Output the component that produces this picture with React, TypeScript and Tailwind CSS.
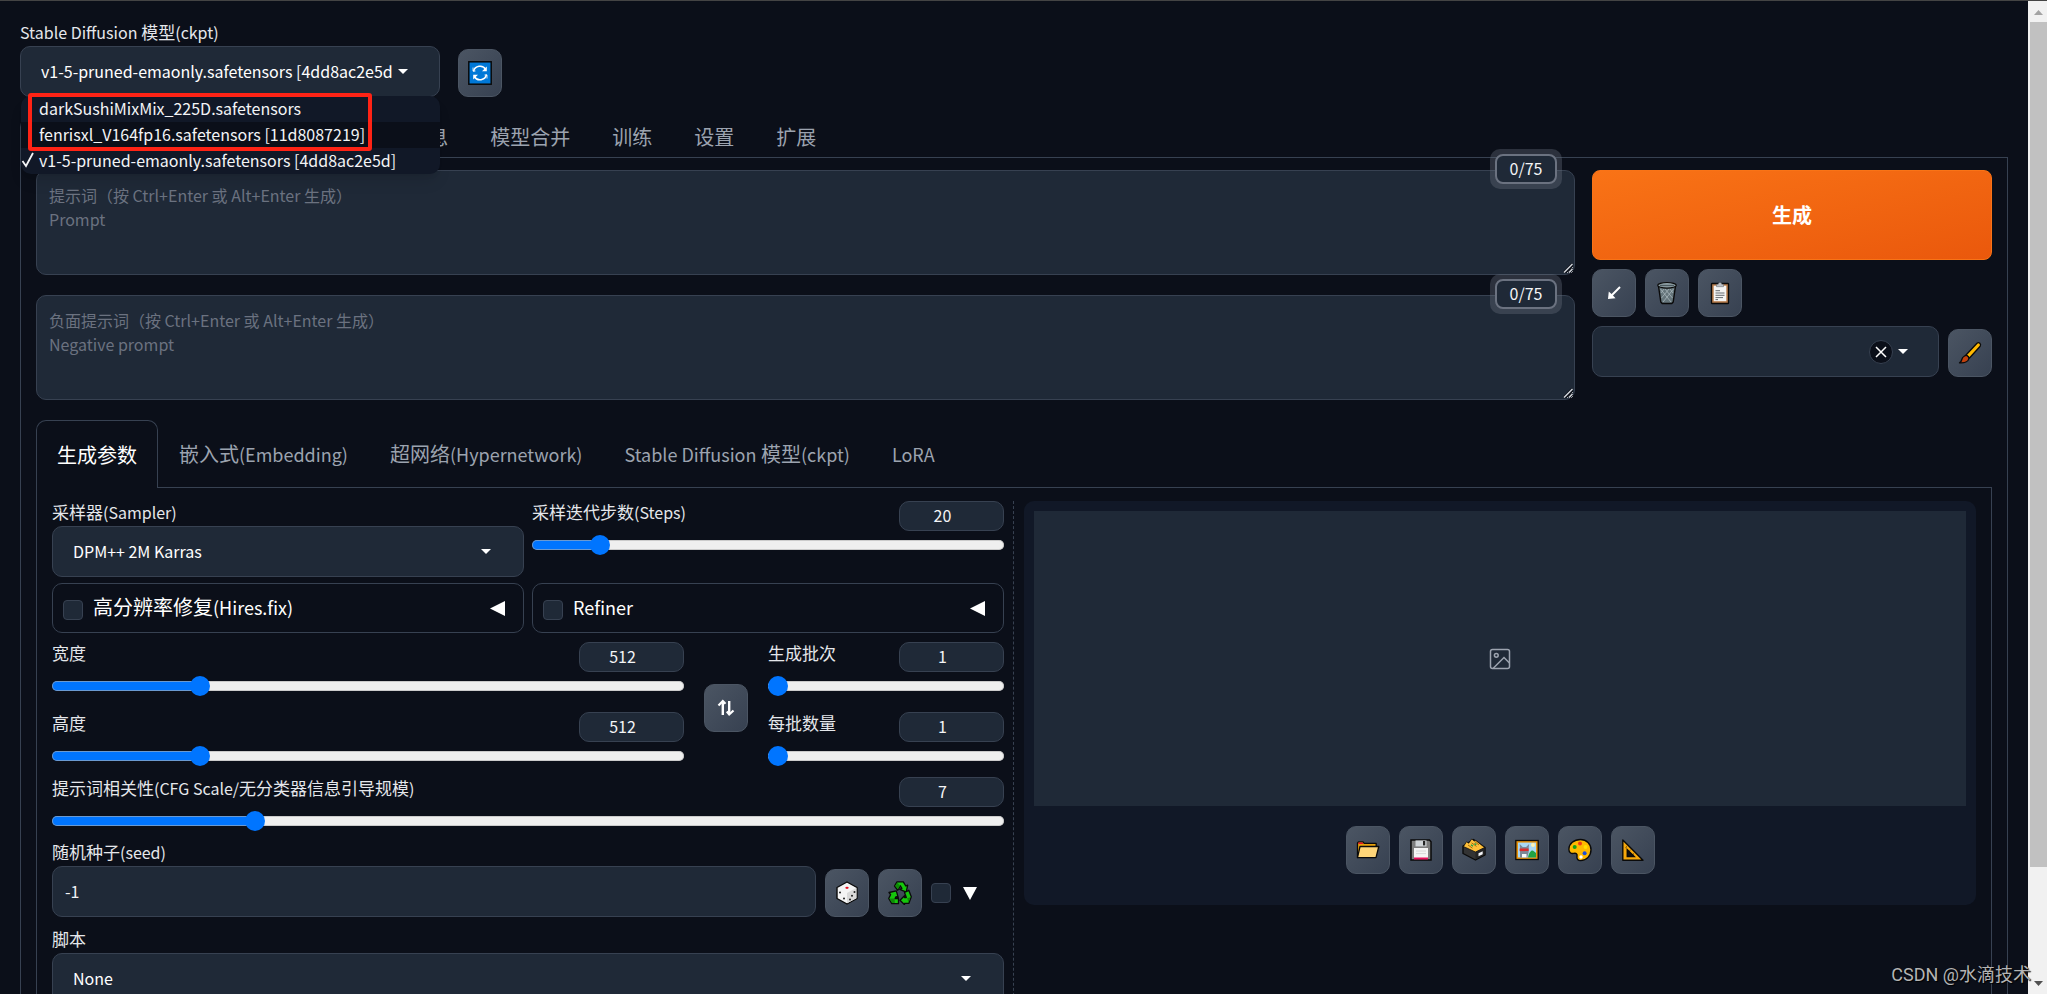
import { Fragment, useId, useState } from "react";
import type { CSSProperties, ReactNode } from "react";

const FONT = "font-['Noto_Sans_CJK_SC','Noto_Sans',sans-serif]";
const BOX = "rounded-[10px] border border-[#374151] bg-[#1f2937]";

/* Latin runs are set one step smaller than the Chinese text around them. */
function Mixed({ text, size = "label" }: { text: string; size?: "label" | "tab" }) {
  const parts = text.split(/([\x21-\x7e]+(?: [\x21-\x7e]+)*)/);
  const latin = size === "tab" ? "text-[18px]" : "text-[16px]";
  return (
    <>
      {parts.map((p, i) =>
        i % 2 ? (
          <span key={i} className={latin}>
            {p}
          </span>
        ) : (
          <Fragment key={i}>{p}</Fragment>
        )
      )}
    </>
  );
}

const LABEL = "flex h-[25px] items-center whitespace-pre pb-1 text-[17px] leading-none text-[#e5e7eb]";

function Caret() {
  return (
    <svg width="10" height="5" viewBox="0 0 10 5" className="shrink-0" aria-hidden="true">
      <path d="M0 0h10L5 5z" fill="#fff" />
    </svg>
  );
}

function Combo({ label, value, pad = "gap-[10px] pr-8", children }: { label: string; value: string; pad?: string; children?: ReactNode }) {
  const id = useId();
  return (
    <div className="relative">
      <label htmlFor={id} className={LABEL}>
        <span>
          <Mixed text={label} />
        </span>
      </label>
      <div className={`flex h-[51px] items-center pl-5 ${pad} ${BOX}`}>
        <input id={id} role="combobox" aria-expanded={!!children} readOnly value={value} className="min-w-0 flex-1 bg-transparent pb-[2px] text-[16px] text-white outline-none" />
        <Caret />
      </div>
      {children}
    </div>
  );
}

function ToolButton({ title, children }: { title: string; children: ReactNode }) {
  return (
    <button
      type="button"
      aria-label={title}
      className="flex h-12 w-11 shrink-0 items-center justify-center rounded-[10px] border border-[#4b5563] bg-linear-to-br from-[#4b5563] to-[#374151]"
    >
      <svg width="24" height="24" viewBox="0 0 24 24" aria-hidden="true">
        {children}
      </svg>
    </button>
  );
}

function Slider({ label, value, min, max }: { label: string; value: number; min: number; max: number }) {
  const id = useId();
  const [v, setV] = useState(value);
  const pct = ((v - min) / (max - min)) * 100;
  const style = { "--fill": `${pct}%` } as CSSProperties;
  return (
    <div>
      <div className="flex h-[30px] items-start justify-between">
        <label htmlFor={id} className={LABEL}>
          <span>
            <Mixed text={label} />
          </span>
        </label>
        <input
          type="number"
          aria-label={label}
          value={v}
          onChange={(e) => setV(Number(e.target.value))}
          className={`h-[30px] w-[105px] pr-[18px] pb-[2px] text-center text-[16px] text-[#f3f4f6] [appearance:textfield] [&::-webkit-inner-spin-button]:appearance-none ${BOX}`}
        />
      </div>
      <input
        id={id}
        type="range"
        min={min}
        max={max}
        value={v}
        style={style}
        onChange={(e) => setV(Number(e.target.value))}
        className="mt-1 block h-5 w-full appearance-none bg-transparent [&::-webkit-slider-runnable-track]:h-[10px] [&::-webkit-slider-runnable-track]:rounded-[5px] [&::-webkit-slider-runnable-track]:bg-[linear-gradient(to_right,#0075ff_var(--fill),#efefef_var(--fill))] [&::-webkit-slider-runnable-track]:shadow-[inset_0_0_0_1px_#b2b2b299] [&::-webkit-slider-thumb]:-mt-[5px] [&::-webkit-slider-thumb]:size-5 [&::-webkit-slider-thumb]:appearance-none [&::-webkit-slider-thumb]:rounded-full [&::-webkit-slider-thumb]:bg-[#0075ff]"
      />
    </div>
  );
}

const CHECK = "size-5 shrink-0 appearance-none rounded-[4px] border border-[#374151] bg-[#1f2937] checked:bg-[#0075ff]";

function Accordion({ label }: { label: string }) {
  const id = useId();
  return (
    <div className="flex h-[50px] items-center rounded-[10px] border border-[#374151] pr-[18px] pl-[10px]">
      <input id={id} type="checkbox" className={`mt-1 ${CHECK}`} />
      <label htmlFor={id} className="flex-1 pb-[2px] pl-[10px] text-[20px] leading-none text-white">
        <Mixed text={label} size="tab" />
      </label>
      <button type="button" aria-label={`展开 ${label}`}>
        <svg width="15" height="15" viewBox="0 0 15 15" aria-hidden="true">
          <path d="M0 7.5 15 0v15z" fill="#fff" />
        </svg>
      </button>
    </div>
  );
}

function Prompt({ label, hint }: { label: string; hint: string }) {
  return (
    <div className="relative h-[105px]">
      <textarea
        aria-label={label}
        placeholder={`${hint}\n${label}`}
        className={`block h-full w-full px-3 py-3 text-[16px] leading-6 text-white placeholder:text-[#6b7280] ${BOX}`}
      />
      <svg width="10" height="10" viewBox="0 0 10 10" className="pointer-events-none absolute right-[2px] bottom-[2px]" aria-hidden="true">
        <path d="M1 9.500 9.500 1M6 9.500 9.500 6" stroke="#0b0f19" strokeWidth="3" />
        <path d="M1 9.500 9.500 1M6 9.500 9.500 6" stroke="#d1d5db" strokeWidth="1.500" />
      </svg>
      <div className="absolute -top-[21px] right-[13px] rounded-[10px] bg-[#6b7280]/35 p-[5px]">
        <div className="flex h-[30px] w-[62px] items-center justify-center rounded-[8px] border-2 border-[#6b7280] bg-[#1f2937] pb-[2px] text-[16px] text-[#f3f4f6]">0/75</div>
      </div>
    </div>
  );
}

const MODELS = ["darkSushiMixMix_225D.safetensors", "fenrisxl_V164fp16.safetensors [11d8087219]", "v1-5-pruned-emaonly.safetensors [4dd8ac2e5d]"];
const MAIN_TABS = ["文生图", "图生图", "更多", "PNG 图片信息", "模型合并", "训练", "设置", "扩展"];
const SUB_TABS = ["生成参数", "嵌入式(Embedding)", "超网络(Hypernetwork)", "Stable Diffusion 模型(ckpt)", "LoRA"];

function Tabs({ items, height }: { items: string[]; height: string }) {
  return (
    <div role="tablist" className={`flex border-b border-[#374151] ${height}`}>
      {items.map((t, i) => (
        <button
          key={t}
          type="button"
          role="tab"
          aria-selected={i === 0}
          className={
            i === 0
              ? "-mb-px shrink-0 rounded-t-[10px] border border-b-0 border-[#374151] bg-[#0b0f19] px-5 text-[20px] leading-none whitespace-pre text-white"
              : "shrink-0 px-[21px] text-[20px] leading-none whitespace-pre text-[#9ca3af]"
          }
        >
          <Mixed text={t} size="tab" />
        </button>
      ))}
    </div>
  );
}

const INK = "#0a0a0a";

function FolderIcon() {
  return (
    <g stroke={INK} strokeWidth="1.3" strokeLinejoin="round">
      <path d="M1.5 19.5V5l1-1.2h4.5l1.2 1.6h12V9z" fill="#e8a20c" />
      <path d="M2.4 4.5h4l1 1.4H2.4z" fill="#e81224" stroke="none" />
      <path d="M4 8.5h18.8L20 19.7H1.5z" fill="#ffd679" />
    </g>
  );
}
function FloppyIcon() {
  return (
    <g>
      <path d="M2 2h18.5L22 3.7V22H2z" fill="#7d7d7d" stroke={INK} strokeWidth="1.5" />
      <rect x="6.5" y="2.4" width="11" height="6" fill="#cfd3d6" />
      <rect x="14" y="3" width="2.2" height="4.4" fill="#222" />
      <path d="M5 10h14v11H5z" fill="#f5f5f5" />
      <path d="M5 19.5h14v2H5z" fill="#e8105c" />
      <path d="M7 13h10M7 15.6h10" stroke="#d0d0d0" strokeWidth=".8" />
    </g>
  );
}
function CardBoxIcon() {
  return (
    <g strokeLinejoin="round">
      <path d="M1 8 11.5 1.5l11.5 8V17l-9.500 5L1 15.500z" fill="#333" stroke={INK} strokeWidth="1.4" />
      <path d="M1.500 8.500 4.500 3.800l2.200 1.400L9.800.900l2.200 2.200 1.800-.6 8.700 7-9 4.500z" fill="#ffc03a" stroke={INK} strokeWidth=".7" />
      <path d="m6 7 4.500 3.200M9.500 4.800l5 3.600M13 3.800l4 3.200" stroke="#7a4a00" strokeWidth=".7" />
      <path d="m9 6.800 2 1.400M12.500 5.500l1.800 1.300" stroke="#16a34a" strokeWidth="1.300" />
      <path d="M13.500 14 22.500 9.700v7L13.500 21.300z" fill="#242424" />
      <path d="m16.500 15.300 4.200-2v3l-4.200 2z" fill="#f3f4f6" />
    </g>
  );
}
function PictureIcon() {
  return (
    <g>
      <rect x=".8" y="2.5" width="22.4" height="19" fill="#e8930c" stroke={INK} strokeWidth="1.3" />
      <rect x="3" y="4.6" width="18" height="14.8" fill="#a9d8f5" />
      <circle cx="18" cy="7" r="2" fill="#fff3b0" />
      <path d="M13 19.4c1-5 3-7 4.200-7S20 14 21 15v4.400z" fill="#22a344" />
      <path d="M5 19.400V10l-.3-4 3 3h3.400l3-3-.4 4v4l-1.500 5.400z" fill="#7c8796" />
      <path d="M4.600 10.500h9v2.600h-9z" fill="#d92b2b" />
      <path d="M7 16h4.500v3.400H7z" fill="#f8fafc" />
    </g>
  );
}
function PaletteIcon() {
  return (
    <g>
      <path d="M12.500 1.500C6 1.500.900 5.800.900 11.300c0 3.200 2.200 4.600 4.700 4.100 2.600-.6 3.900.5 3.400 2.900-.5 2.700 1 4.300 3.600 4.300 6 0 10.400-5 10.400-10.900S18.600 1.500 12.500 1.500z" fill="#ffb900" stroke={INK} strokeWidth="1.4" />
      <circle cx="6.7" cy="9" r="2" fill="#16a016" />
      <circle cx="12" cy="5.5" r="2" fill="#f03a17" />
      <circle cx="17.5" cy="9" r="1.9" fill="#ffe100" />
      <circle cx="16.6" cy="15.2" r="2" fill="#1d4fd8" />
      <circle cx="13" cy="19" r="1.7" fill="#fff" />
    </g>
  );
}
function RulerIcon() {
  return (
    <g>
      <path d="M1.800 2v20.300H22z" fill="#f7a80b" stroke={INK} strokeWidth="1.4" strokeLinejoin="round" />
      <path d="M6.300 11.800v6.700h6.800z" fill="#111" stroke={INK} strokeWidth="1.5" />
      <path d="m6 8.500-1.500 1.200M9.500 12 8.300 13.200M13 15.500 11.800 16.700" stroke={INK} strokeWidth=".7" />
    </g>
  );
}
function TrashIcon() {
  return (
    <g stroke={INK} strokeLinejoin="round">
      <path d="M3.500 5h17l-2.300 16-1.400 1.500H7.200L5.800 21z" fill="#65757b" strokeWidth="1.4" />
      <path d="m5.500 8 10.500 13M10 8l7.500 9M15 8l3 4M18.500 8 8 21M14 8l-7.500 9M9 8l-3 4" stroke="#a9b8bd" strokeWidth=".8" />
      <ellipse cx="12" cy="4.3" rx="9.3" ry="2.8" fill="#8fa0a6" strokeWidth="1.2" />
      <path d="M5 4.500h14" stroke="#4b5a60" strokeWidth="1.3" />
    </g>
  );
}
function ClipboardIcon() {
  return (
    <g>
      <rect x="3.5" y="2.5" width="17" height="20" rx=".6" fill="#b67b4b" stroke={INK} strokeWidth="1.3" />
      <path d="M5.700 4.700h12.600v15.500H5.700z" fill="#f5f5f5" />
      <path d="M7.500 9.700h4.500M7.500 12h9M7.500 14.300h9M7.500 16.600h7.500M7.500 18.600h2.500" stroke="#565b62" strokeWidth=".9" />
      <path d="M8.500 5.700V3.300h1.700a1.800 1.800 0 0 1 3.600 0h1.700v2.400z" fill="#b9bec4" stroke="#5c6066" strokeWidth=".5" />
    </g>
  );
}
function BrushIcon() {
  return (
    <g stroke={INK} strokeWidth="1.3" strokeLinejoin="round">
      <path d="M8 14 19 2.200c2-1.500 4.500.8 3.200 3L11.500 17z" fill="#ffb900" />
      <path d="M6.500 15c1.800-1.500 4.700.3 4.300 2.600-.5 3-4.300 4.700-9.300 4.200 1.800-.8 2-1.800 2.300-3.300.3-1.600 1.300-2.700 2.700-3.500z" fill="#c2410c" />
    </g>
  );
}
function DiceIcon() {
  return (
    <g>
      <path d="m12 1 10 5.500v11L12 23 2 17.500v-11z" fill="#f4f4f4" stroke={INK} strokeWidth="1.4" strokeLinejoin="round" />
      <path d="M12 12 21.500 6.700v10.500L12 22.300z" fill="#dadada" />
      <ellipse cx="12" cy="6.8" rx="1.7" ry="1.1" fill="#e81224" />
      <g fill="#222">
        <circle cx="5" cy="11.5" r="1" />
        <circle cx="9" cy="17.5" r="1" />
        <circle cx="15" cy="18.5" r="1" />
        <circle cx="17" cy="14.8" r="1" />
        <circle cx="19.5" cy="11" r="1" />
      </g>
    </g>
  );
}
function RecycleIcon() {
  return (
    <g fill="#16c60c" stroke={INK} strokeWidth="1.3" strokeLinejoin="round">
      <path d="M6.500 5 9 .9h6.300L17.800 5l1.900-.8-1.500 7-6.400-2.800 2.100-1.100-1.600-2.500-2.500 4.500z" />
      <path d="m1 11.500 7.300-1.600 2 6.700-2.200-.9L7 17.500h3.500v5.200H3.800L.7 17.500l1.900-3.900z" />
      <path d="m16.500 11.500 4.300-2.200 2.500 6.500-2.500 6.600h-4.300v1.300l-4.500-4.500 4.500-4.500v1.800h1.800z" />
      <path d="M9.300 1.500 12 4.800l-2 3.300L7.200 5zM1.500 17.500h5.300v4.500H4.100zM20.500 21.500l-1.400-4.300 3.400-1z" fill="#0e8a07" stroke="none" />
    </g>
  );
}
function RefreshIcon() {
  return (
    <g>
      <rect x=".8" y=".8" width="22.4" height="22.4" fill="#0078d7" stroke={INK} strokeWidth="1.5" />
      <path d="M5.500 10.500a6.700 6.700 0 0 1 12.300-2M18.500 13.500a6.700 6.700 0 0 1-12.300 2" fill="none" stroke="#fff" strokeWidth="1.5" />
      <path d="M18.800 5.500v4.800H14zM5.200 18.500v-4.800H10z" fill="#fff" />
      <path d="M5 6.500v3.500h2.500M19 17.500V14h-2.500" fill="none" stroke="#fff" strokeWidth=".8" />
    </g>
  );
}

export default function App() {
  const dropId = useId();
  const seedId = useId();
  return (
    <div className={`relative flex h-screen overflow-hidden border-t border-[#444] bg-[#0b0f19] ${FONT}`}>
      <main className="min-w-0 flex-1 overflow-hidden px-5 pt-5">
        <header className="flex items-end gap-[18px]">
          <div className="w-[420px]">
            <Combo label="Stable Diffusion 模型(ckpt)" value={MODELS[2]} pad="gap-[6px] pr-[31px]">
              <ul role="listbox" className="absolute top-full right-0 left-0 z-20 -mt-px ml-px overflow-hidden rounded-[10px] bg-[#111827] text-[16px] text-[#f3f4f6] shadow-lg">
                {MODELS.map((m, i) => (
                  <li key={m} role="option" aria-selected={i === 2} className={`flex h-[26px] items-center pb-[2px] ${i === 1 ? "bg-[#0b0f19]" : ""}`}>
                    <svg width="18" height="16" viewBox="0 0 18 16" className="shrink-0" aria-hidden="true">
                      {i === 2 && <path d="m1.500 9 3.500 5L12 1" fill="none" stroke="#f3f4f6" strokeWidth="1.8" />}
                    </svg>
                    <span className="whitespace-pre">{m}</span>
                  </li>
                ))}
              </ul>
              <div className="absolute -bottom-[54px] left-2 z-30 h-[58px] w-[344px] rounded-[3px] border-4 border-[#ff2315]" />
            </Combo>
          </div>
          <ToolButton title="刷新">
            <RefreshIcon />
          </ToolButton>
        </header>

        <nav className="mt-5">
          <Tabs items={MAIN_TABS} height="h-[41px]" />
        </nav>

        <div className="border-x border-[#374151] px-[15px] pt-3">
          <section className="flex gap-[17px]">
            <div className="flex min-w-0 flex-1 flex-col gap-5">
              <Prompt label="Prompt" hint="提示词（按 Ctrl+Enter 或 Alt+Enter 生成）" />
              <Prompt label="Negative prompt" hint="负面提示词（按 Ctrl+Enter 或 Alt+Enter 生成）" />
            </div>
            <div className="flex w-[400px] shrink-0 flex-col gap-[9px]">
              <button type="button" className="h-[90px] rounded-[8px] border border-[#f97316] bg-linear-to-br from-[#f97316] to-[#ea580c] text-[20px] font-bold text-white">
                生成
              </button>
              <div className="flex gap-[9px]">
                <ToolButton title="读取参数">
                  <path d="M18 6 9.500 14.500" stroke="#fff" strokeWidth="2" />
                  <path d="M6 18 6.800 10.500 9.500 13l1.500 1.500 2.500 2.700z" fill="#fff" />
                </ToolButton>
                <ToolButton title="清空提示词">
                  <TrashIcon />
                </ToolButton>
                <ToolButton title="应用预设">
                  <ClipboardIcon />
                </ToolButton>
              </div>
              <div className="flex items-end gap-[9px]">
                <div className={`flex h-[51px] flex-1 items-center gap-[5px] pr-[30px] pl-5 ${BOX}`}>
                  <input id={dropId} role="combobox" aria-expanded="false" aria-label="预设样式" className="min-w-0 flex-1 bg-transparent text-[16px] text-white outline-none" />
                  <button type="button" aria-label="清除" className="flex size-6 items-center justify-center rounded-full border border-[#374151] bg-[#0b0f19]">
                    <svg width="12" height="12" viewBox="0 0 12 12" aria-hidden="true">
                      <path d="m1 1 10 10M11 1 1 11" stroke="#fff" strokeWidth="1.5" />
                    </svg>
                  </button>
                  <Caret />
                </div>
                <ToolButton title="编辑预设">
                  <BrushIcon />
                </ToolButton>
              </div>
            </div>
          </section>

          <div className="mt-5">
            <Tabs items={SUB_TABS} height="h-[68px]" />
          </div>

          <div className="flex border-x border-[#374151] px-[15px] pt-[13px]">
            <section className="min-w-0 flex-1 pb-8">
              <div className="grid grid-cols-2 gap-x-2 gap-y-[6px]">
                <Combo label="采样器(Sampler)" value="DPM++ 2M Karras" />
                <Slider label="采样迭代步数(Steps)" value={20} min={1} max={150} />
                <Accordion label="高分辨率修复(Hires.fix)" />
                <Accordion label="Refiner" />
              </div>

              <div className="mt-[9px] flex items-center gap-5">
                <div className="flex min-w-0 flex-1 flex-col gap-4">
                  <Slider label="宽度" value={512} min={64} max={2048} />
                  <Slider label="高度" value={512} min={64} max={2048} />
                </div>
                <div className="pt-2">
                  <ToolButton title="交换宽高">
                    <path d="M8.800 19V6M15.200 5v13" stroke="#fff" strokeWidth="2.4" />
                    <path d="M4.500 9.500 8.800 5l2.700 2.800M12.800 15.500l2.400 3 4.300-4" fill="none" stroke="#fff" strokeWidth="2.2" />
                  </ToolButton>
                </div>
                <div className="flex w-[236px] flex-col gap-4">
                  <Slider label="生成批次" value={1} min={1} max={100} />
                  <Slider label="每批数量" value={1} min={1} max={8} />
                </div>
              </div>

              <div className="mt-[11px]">
                <Slider label="提示词相关性(CFG Scale/无分类器信息引导规模)" value={7} min={1} max={30} />
              </div>

              <div className="mt-[10px] flex items-end gap-[9px]">
                <div className="min-w-0 flex-1">
                  <label htmlFor={seedId} className={LABEL}>
                    <span>
                      <Mixed text="随机种子(seed)" />
                    </span>
                  </label>
                  <input id={seedId} type="text" defaultValue="-1" className={`block h-[51px] w-full px-3 pb-[2px] text-[16px] text-[#f3f4f6] ${BOX}`} />
                </div>
                <ToolButton title="随机">
                  <DiceIcon />
                </ToolButton>
                <ToolButton title="复用种子">
                  <RecycleIcon />
                </ToolButton>
                <div className="flex h-12 w-[73px] items-center gap-3">
                  <input type="checkbox" aria-label="更多种子选项" className={CHECK} />
                  <svg width="14" height="13" viewBox="0 0 14 13" aria-hidden="true">
                    <path d="M0 0h14L7 13z" fill="#fff" />
                  </svg>
                </div>
              </div>

              <div className="mt-[11px]">
                <Combo label="脚本" value="None" />
              </div>
            </section>

            <div className="mr-[10px] ml-[9px] border-l border-dashed border-[#374151]" />

            <section className="min-w-0 flex-1">
              <div className="rounded-[10px] bg-[#111827] px-[10px] pt-[10px] pb-[31px]">
                <div className="flex h-[295px] items-center justify-center bg-[#1f2937]">
                  <svg width="22" height="22" viewBox="0 0 22 22" fill="none" stroke="#9ca3af" strokeWidth="1.5" aria-hidden="true">
                    <rect x="1.500" y="1.500" width="19" height="19" rx="2" />
                    <circle cx="7.300" cy="7.300" r="1.900" />
                    <path d="M4 20.500 15 9.500l5.500 5.500" />
                  </svg>
                </div>
                <div className="mt-5 flex justify-center gap-[9px]">
                  <ToolButton title="打开输出目录">
                    <FolderIcon />
                  </ToolButton>
                  <ToolButton title="保存">
                    <FloppyIcon />
                  </ToolButton>
                  <ToolButton title="打包下载">
                    <CardBoxIcon />
                  </ToolButton>
                  <ToolButton title="发送到图生图">
                    <PictureIcon />
                  </ToolButton>
                  <ToolButton title="发送到重绘">
                    <PaletteIcon />
                  </ToolButton>
                  <ToolButton title="发送到更多">
                    <RulerIcon />
                  </ToolButton>
                </div>
              </div>
            </section>
          </div>
        </div>
      </main>

      <div aria-hidden="true" className="flex w-[19px] shrink-0 flex-col items-center bg-[#f1f1f1] pl-[2px]">
        <svg width="17" height="21" viewBox="0 0 17 21" className="shrink-0">
          <path d="M4 14h9L8.500 9z" fill="#a3a3a3" />
        </svg>
        <div className="w-full flex-[845] bg-[#c1c1c1]" />
        <div className="flex-[106]" />
        <svg width="17" height="21" viewBox="0 0 17 21" className="shrink-0">
          <path d="M4 8h9l-4.500 5z" fill="#505050" />
        </svg>
      </div>

      <div className="absolute right-4 bottom-[7px] font-['Roboto','Noto_Sans_CJK_SC',sans-serif] text-[18px] leading-6 text-[#b4b4b4] [text-shadow:1px_1px_1px_#000]">CSDN @水滴技术</div>
    </div>
  );
}
